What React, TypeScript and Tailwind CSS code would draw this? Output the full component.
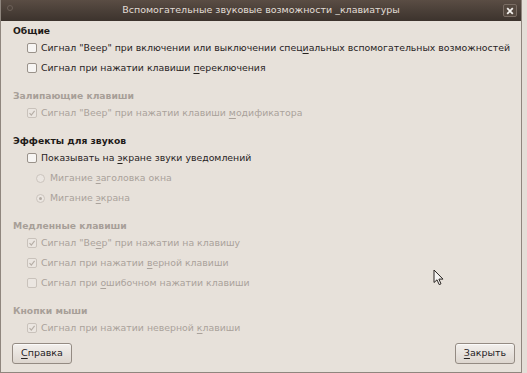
import React from "react";

const font = { fontFamily: '"DejaVu Sans", "Noto Sans", sans-serif' };

type Part = string | { u: string };

const Text = ({ parts }: { parts: Part[] }) => (
  <span className="whitespace-nowrap">
    {parts.map((p, i) =>
      typeof p === "string" ? (
        <React.Fragment key={i}>{p}</React.Fragment>
      ) : (
        <span key={i} className="underline underline-offset-[2px]">
          {p.u}
        </span>
      ),
    )}
  </span>
);

const Check = ({ checked, disabled }: { checked?: boolean; disabled?: boolean }) => (
  <span
    className={
      "flex h-[10px] w-[10px] shrink-0 items-center justify-center rounded-[2px] border " +
      (disabled ? "border-[#c9c2bb] bg-[#ebe6e1]" : "border-[#9a928a] bg-[#f7f5f3]")
    }
  >
    {checked && (
      <svg width="8" height="8" viewBox="0 0 8 8">
        <path d="M1.5 4.2 L3.3 6 L6.6 1.8" fill="none" stroke="#b8b0a8" strokeWidth="1.2" />
      </svg>
    )}
  </span>
);

const Radio = ({ checked }: { checked?: boolean }) => (
  <span className="flex h-[9px] w-[9px] shrink-0 items-center justify-center rounded-full border border-[#cbc4bd] bg-[#ebe6e1]">
    {checked && <span className="h-[3px] w-[3px] rounded-full bg-[#b3aba3]" />}
  </span>
);

const Heading = ({ children, disabled }: { children: React.ReactNode; disabled?: boolean }) => (
  <div
    className={
      "flex h-[15px] items-center whitespace-nowrap pl-[12px] text-[9.2px] font-bold " +
      (disabled ? "text-[#a79f98]" : "text-[#1f1b18]")
    }
  >
    {children}
  </div>
);

const CheckRow = ({ parts, checked, disabled }: { parts: Part[]; checked?: boolean; disabled?: boolean }) => (
  <div
    className={
      "flex h-[20px] items-center gap-[4px] pl-[26px] text-[9.35px] " +
      (disabled ? "text-[#aaa29b]" : "text-[#27231f]")
    }
  >
    <Check checked={checked} disabled={disabled} />
    <Text parts={parts} />
  </div>
);

const RadioRow = ({ parts, checked }: { parts: Part[]; checked?: boolean }) => (
  <div className="flex h-[20px] items-center gap-[5px] pl-[35px] text-[9.35px] text-[#aaa29b]">
    <Radio checked={checked} />
    <Text parts={parts} />
  </div>
);

const Button = ({ parts, className }: { parts: Part[]; className?: string }) => (
  <button
    className={
      "flex h-[21px] items-center justify-center rounded-[3px] border border-[#948b83] bg-gradient-to-b from-[#f3f0ed] to-[#ddd6cf] text-[9.5px] text-[#26221f] shadow-[inset_0_1px_0_#fbfaf9] " +
      (className ?? "")
    }
  >
    <Text parts={parts} />
  </button>
);

export default function App() {
  return (
    <div className="relative h-[373px] w-[527px] overflow-hidden bg-[#e4ded7]" style={font}>
      <div className="flex h-[373px] w-[522px] flex-col border-l border-r border-b border-[#8f867e] bg-[#e7e1da]">
        {/* title bar */}
        <div className="relative flex h-[21px] shrink-0 items-center justify-center bg-gradient-to-b from-[#5a4d44] to-[#3c332d] text-[9.5px] text-[#e2ddd6]">
          <span className="absolute left-[6px] top-[5px] h-[6px] w-[6px] rounded-full border border-[#6c6058]" />
          <span className="whitespace-nowrap">Вспомогательные звуковые возможности _клавиатуры</span>
          <span className="absolute right-[4px] top-[4px] flex h-[13px] w-[14px] items-center justify-center rounded-[2px] border border-[#7a6d64] bg-[#54483f]">
            <svg width="8" height="8" viewBox="0 0 8 8">
              <path d="M1.2 1.2 L6.8 6.8 M6.8 1.2 L1.2 6.8" stroke="#f4f1ee" strokeWidth="1.8" />
            </svg>
          </span>
        </div>

        <div className="flex flex-1 flex-col pt-[2px]">
          <Heading>Общие</Heading>
          <CheckRow
            parts={[
              'Сигнал "Beep" при включении или выключении спец',
              { u: "и" },
              "альных вспомогательных возможностей",
            ]}
          />
          <CheckRow parts={["Сигнал при нажатии клавиши ", { u: "п" }, "ереключения"]} />

          <div className="mt-[10px]">
            <Heading disabled>Залипающие клавиши</Heading>
            <CheckRow disabled checked parts={['Сигнал "Beep" при нажатии клавиши ', { u: "м" }, "одификатора"]} />
          </div>

          <div className="mt-[10px]">
            <Heading>Эффекты для звуков</Heading>
            <CheckRow parts={["Показывать на ", { u: "э" }, "кране звуки уведомлений"]} />
            <RadioRow parts={["Мигание ", { u: "з" }, "аголовка окна"]} />
            <RadioRow checked parts={["Мигание ", { u: "э" }, "крана"]} />
          </div>

          <div className="mt-[10px]">
            <Heading disabled>Медленные клавиши</Heading>
            <CheckRow disabled checked parts={['Сигнал "Be', { u: "e" }, 'p" при нажатии на клавишу']} />
            <CheckRow disabled checked parts={["Сигнал при нажатии ", { u: "в" }, "ерной клавиши"]} />
            <CheckRow disabled parts={["Сигнал при ", { u: "о" }, "шибочном нажатии клавиши"]} />
          </div>

          <div className="mt-[10px]">
            <Heading disabled>Кнопки мыши</Heading>
            <CheckRow disabled checked parts={["Сигнал при нажатии неверной ", { u: "к" }, "лавиши"]} />
          </div>

          <div className="mt-auto flex items-center justify-between pb-[8px] pl-[11px] pr-[6px]">
            <Button className="w-[60px]" parts={[{ u: "С" }, "правка"]} />
            <Button className="w-[60px]" parts={[{ u: "З" }, "акрыть"]} />
          </div>
        </div>
      </div>

      {/* mouse pointer */}
      <svg className="absolute left-[433px] top-[269px]" width="12" height="17" viewBox="0 0 12 17">
        <path
          d="M1 1 L1 13.5 L4 10.8 L6.2 15.6 L8 14.8 L5.9 10.1 L10 10.1 Z"
          fill="#f6f4f2"
          stroke="#2a2522"
          strokeWidth="1"
          strokeLinejoin="round"
        />
      </svg>
    </div>
  );
}
